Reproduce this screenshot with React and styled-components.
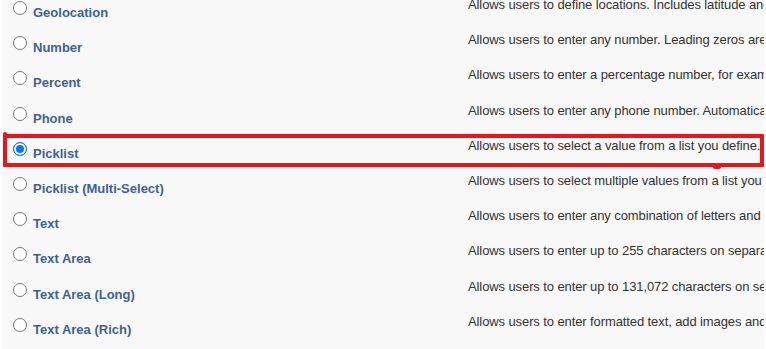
import React from 'react';
import styled, { createGlobalStyle } from 'styled-components';

const GlobalStyle = createGlobalStyle`
  html, body {
    margin: 0;
    padding: 0;
    background: #ffffff;
    overflow: hidden;
  }
  body {
    font-family: "Liberation Sans", Arial, sans-serif;
    font-size: 13px;
  }
`;

const Page = styled.div`
  position: relative;
  margin: 0 2px;
  height: 349px;
  background: #f8f8f8;
  overflow: hidden;
`;

const List = styled.div`
  display: grid;
  grid-template-columns: 466px 1fr;
  grid-auto-rows: 35.2px;
  margin-top: -3px;
`;

const Option = styled.label`
  display: flex;
  align-items: flex-start;
  padding-left: 11px;
  cursor: pointer;
`;

const Radio = styled.span`
  box-sizing: border-box;
  width: 14px;
  height: 14px;
  margin-top: 4px;
  border-radius: 50%;
  border: 1px solid ${(p) => (p.checked ? '#0b75f2' : '#777777')};
  background: ${(p) => (p.checked ? '#0b75f2' : '#ffffff')};
  box-shadow: ${(p) => (p.checked ? 'inset 0 0 0 2px #ffffff' : 'none')};
  flex-shrink: 0;
`;

const Name = styled.span`
  margin-left: 6px;
  padding-top: 8px;
  line-height: 15px;
  font-weight: bold;
  color: #3e6290;
  white-space: nowrap;
`;

const Description = styled.div`
  line-height: 15px;
  color: #333333;
  letter-spacing: -0.1px;
  white-space: nowrap;
  overflow: hidden;
`;

const Highlight = styled.div`
  position: absolute;
  left: 1px;
  top: 134px;
  width: 761px;
  height: 33px;
  box-sizing: border-box;
  border: 4px solid #e8161c;
  border-radius: 1px;
  pointer-events: none;

  &::before {
    content: '';
    position: absolute;
    left: -4px;
    top: -6px;
    width: 4px;
    height: 8px;
    background: #e8161c;
    border-radius: 2px 2px 0 0;
  }

  &::after {
    content: '';
    position: absolute;
    left: 706px;
    bottom: -6px;
    width: 8px;
    height: 3px;
    background: #e8161c;
    border-radius: 0 0 2px 2px;
  }
`;

const types = [
  ['Geolocation', 'Allows users to define locations. Includes latitude and longitude components, and can be used to calculate distance.'],
  ['Number', 'Allows users to enter any number. Leading zeros are removed.'],
  ['Percent', 'Allows users to enter a percentage number, for example, \'10\' and automatically adds the percent sign to the number.'],
  ['Phone', 'Allows users to enter any phone number. Automatically formats it as a phone number.'],
  ['Picklist', 'Allows users to select a value from a list you define.'],
  ['Picklist (Multi-Select)', 'Allows users to select multiple values from a list you define.'],
  ['Text', 'Allows users to enter any combination of letters and numbers.'],
  ['Text Area', 'Allows users to enter up to 255 characters on separate lines.'],
  ['Text Area (Long)', 'Allows users to enter up to 131,072 characters on separate lines.'],
  ['Text Area (Rich)', 'Allows users to enter formatted text, add images and links. Up to 131,072 characters on separate lines.'],
];

export default function App() {
  const selected = 'Picklist';
  return (
    <>
      <GlobalStyle />
      <Page>
        <List>
          {types.map(([name, text]) => (
            <React.Fragment key={name}>
              <Option>
                <Radio checked={name === selected} />
                <Name>{name}</Name>
              </Option>
              <Description>{text}</Description>
            </React.Fragment>
          ))}
        </List>
        <Highlight />
      </Page>
    </>
  );
}
